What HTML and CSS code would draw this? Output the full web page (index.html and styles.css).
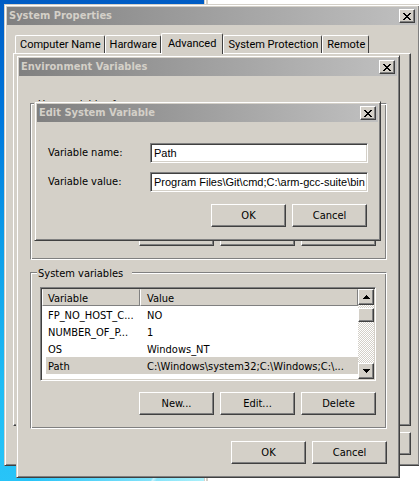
FILE: index.html
```html
<!DOCTYPE html>
<html lang="en">
<head>
<meta charset="utf-8">
<title>Environment Variables</title>
<link rel="stylesheet" href="styles.css">
</head>
<body>
<main class="desktop">
  <div class="wallpaper"></div>

  <section class="window win-properties">
    <header class="titlebar">
      <h1>System Properties</h1>
      <button class="close" aria-label="Close"><svg viewBox="0 0 8 7"><path d="M0 0h2v1h1v1h2v-1h1v-1h2v1h-1v1h-1v1h-1v1h1v1h1v1h1v1h-2v-1h-1v-1h-2v1h-1v1h-2v-1h1v-1h1v-1h1v-1h-1v-1h-1v-1h-1z"/></svg></button>
    </header>
    <div class="props-body">
      <nav class="tabs">
        <button class="tab">Computer Name</button>
        <button class="tab">Hardware</button>
        <button class="tab selected">Advanced</button>
        <button class="tab">System Protection</button>
        <button class="tab">Remote</button>
      </nav>
      <div class="tab-panel"></div>
      <div class="actions props-actions"><button class="btn" aria-label="Apply"></button></div>
    </div>
  </section>

  <section class="window win-environment">
    <header class="titlebar">
      <h2>Environment Variables</h2>
      <button class="close" aria-label="Close"><svg viewBox="0 0 8 7"><path d="M0 0h2v1h1v1h2v-1h1v-1h2v1h-1v1h-1v1h-1v1h1v1h1v1h1v1h-2v-1h-1v-1h-2v1h-1v1h-2v-1h1v-1h1v-1h1v-1h-1v-1h-1v-1h-1z"/></svg></button>
    </header>
    <div class="env-body">
      <div class="group">
        <h3 class="legend">User variables for</h3>
        <div class="actions">
          <button class="btn" aria-label="New"></button>
          <button class="btn" aria-label="Edit"></button>
          <button class="btn" aria-label="Delete"></button>
        </div>
      </div>
      <div class="group">
        <h3 class="legend">System variables</h3>
        <div class="list">
          <div class="rows">
            <table>
              <thead><tr><th class="col-name">Variable</th><th>Value</th></tr></thead>
              <tbody>
                <tr><td>FP_NO_HOST_C...</td><td>NO</td></tr>
                <tr><td>NUMBER_OF_P...</td><td>1</td></tr>
                <tr><td>OS</td><td>Windows_NT</td></tr>
                <tr class="current"><td>Path</td><td>C:\Windows\system32;C:\Windows;C:\...</td></tr>
              </tbody>
            </table>
          </div>
          <div class="scrollbar">
            <button class="arrow" aria-label="Scroll up"><svg viewBox="0 0 7 4"><path d="M3 0h1v1h1v1h1v1h1v1h-7v-1h1v-1h1v-1h1z"/></svg></button>
            <div class="thumb"></div>
            <button class="arrow" aria-label="Scroll down"><svg viewBox="0 0 7 4"><path d="M0 0h7v1h-1v1h-1v1h-1v1h-1v-1h-1v-1h-1v-1h-1z"/></svg></button>
          </div>
        </div>
        <div class="actions">
          <button class="btn">New...</button>
          <button class="btn">Edit...</button>
          <button class="btn">Delete</button>
        </div>
      </div>
      <div class="actions">
        <button class="btn">OK</button>
        <button class="btn">Cancel</button>
      </div>
    </div>
  </section>

  <section class="window win-edit">
    <header class="titlebar">
      <h2>Edit System Variable</h2>
      <button class="close" aria-label="Close"><svg viewBox="0 0 8 7"><path d="M0 0h2v1h1v1h2v-1h1v-1h2v1h-1v1h-1v1h-1v1h1v1h1v1h1v1h-2v-1h-1v-1h-2v1h-1v1h-2v-1h1v-1h1v-1h1v-1h-1v-1h-1v-1h-1z"/></svg></button>
    </header>
    <form class="edit-body">
      <label for="var-name">Variable name:</label>
      <input id="var-name" type="text" value="Path">
      <label for="var-value">Variable value:</label>
      <input id="var-value" type="text" value="Program Files\Git\cmd;C:\arm-gcc-suite\bin">
      <div class="actions">
        <button class="btn" type="button">OK</button>
        <button class="btn" type="button">Cancel</button>
      </div>
    </form>
  </section>
</main>
</body>
</html>
```
FILE: styles.css
```css
:root {
  --face: #d4d0c8;
  --shadow: #808080;
  --dark: #404040;
  --ui: Tahoma, "DejaVu Sans Condensed", "DejaVu Sans", sans-serif;
}

* { box-sizing: border-box; }

body {
  margin: 0;
  font: 11px/16px var(--ui);
  color: #000;
  background: #fff;
}

button, input { font: inherit; color: inherit; padding: 0; }
h1, h2, h3 { margin: 0; font-size: inherit; }
svg { display: block; fill: #000; shape-rendering: crispEdges; }

.desktop {
  position: relative;
  min-height: 100vh;
  overflow: hidden;
}

.wallpaper {
  width: 208px;
  height: 100vh;
  background:
    linear-gradient(120deg, transparent 58%, #ffffff90 62%, transparent 70%) 130px 100% / 40px 12px no-repeat,
    radial-gradient(circle at 220px 100%, #b8f4fa, #b8f4fa00 190px),
    linear-gradient(#005cc4, #0078dc 25%, #0c9ce8 50%, #20bcf4 80%, #28c4f8);
  border-right: 2px solid #d4d0c8;
  box-shadow: inset -1px 0 #fff, inset -2px 0 #d4d0c8;
}

/* Windows */
.window {
  position: absolute;
  padding: 2px;
  background: var(--face);
  border: 1px solid;
  border-color: var(--face) var(--dark) var(--dark) var(--face);
  box-shadow: inset 1px 1px #fff, inset -1px -1px var(--shadow);
}

.win-properties { left: 4px; top: 4px; width: 416px; }
.win-environment { left: 16px; top: 55px; width: 384px; }
.win-edit { left: 34px; top: 101px; width: 347px; }

.titlebar {
  display: flex;
  align-items: center;
  justify-content: space-between;
  height: 18px;
  padding: 0 2px;
  color: var(--face);
  font-weight: bold;
  background: linear-gradient(90deg, #808080, #c0c0c0);
}

.close, .btn, .arrow, .thumb {
  background: var(--face);
  border: 1px solid;
  border-color: #fff var(--dark) var(--dark) #fff;
  box-shadow: inset -1px -1px var(--shadow);
}

.close {
  width: 16px;
  height: 14px;
  padding: 2px 3px;
}
.close svg { width: 8px; height: 7px; }

.btn { width: 75px; height: 23px; }

.actions {
  display: flex;
  justify-content: flex-end;
  gap: 6px;
}

/* System Properties */
.props-body { padding: 8px 6px; }

.tabs {
  display: flex;
  align-items: flex-end;
  height: 20px;
  padding-left: 2px;
  font-family: Roboto, sans-serif;
}

.tab {
  height: 18px;
  padding: 0 3px 0 4px;
  white-space: nowrap;
  background: var(--face);
  border: 1px solid;
  border-color: #fff var(--dark) transparent #fff;
  border-bottom: 0;
  border-radius: 2px 2px 0 0;
}
.tab.selected { height: 21px; margin-bottom: -1px; padding: 0 6px; z-index: 1; }

.tab-panel {
  height: 373px;
  margin-bottom: 6px;
  border: 1px solid;
  border-color: #fff var(--dark) var(--dark) #fff;
  box-shadow: inset -1px -1px var(--shadow);
}

/* Environment Variables */
.env-body { padding: 27px 10px 11px 11px; }

.group {
  display: flex;
  flex-direction: column;
  height: 157px;
  margin-bottom: 12px;
  padding: 0 10px 13px 9px;
  border: 1px solid var(--shadow);
  border-right-color: #fff;
  border-bottom-color: #fff;
  box-shadow: inset 1px 1px #fff, inset -1px -1px var(--shadow);
}
.group .actions { margin-top: auto; }

.legend {
  align-self: flex-start;
  height: 16px;
  margin: -7px 0 5px -3px;
  padding: 0 9px 0 1px;
  font-weight: normal;
  background: var(--face);
}

.list {
  display: flex;
  height: 94px;
  padding: 1px;
  background: #fff;
  border: 1px solid;
  border-color: var(--shadow) #fff #fff var(--shadow);
  box-shadow: inset 1px 1px var(--dark), inset -1px -1px var(--face);
}
.rows { flex: 1; min-width: 0; }

table {
  width: 100%;
  table-layout: fixed;
  border-collapse: separate;
  border-spacing: 0;
  white-space: nowrap;
}
.col-name { width: 98px; }
th {
  height: 17px;
  padding: 2px 6px 0;
  line-height: 13px;
  font-weight: normal;
  text-align: left;
  background: var(--face);
  border: 1px solid;
  border-color: var(--face) var(--shadow) var(--shadow) #fff;
}
th.col-name { padding-left: 5px; }
td { height: 17px; padding: 2px 0 0 7px; line-height: 15px; }
td:first-child { padding-left: 2px; border-left: 4px solid #fff; }
.current td { background: var(--face); }

.scrollbar {
  display: flex;
  flex: none;
  flex-direction: column;
  width: 16px;
  background: repeating-conic-gradient(#fff 0 25%, var(--face) 0 50%) 0 0 / 2px 2px;
}
.arrow {
  display: grid;
  place-items: center;
  width: 16px;
  height: 16px;
}
.arrow svg { width: 7px; height: 4px; }
.thumb { height: 14px; margin: 3px 0 auto; }

/* Edit System Variable */
.edit-body {
  display: grid;
  grid-template-columns: 102px 1fr;
  row-gap: 9px;
  align-items: center;
  padding: 21px 10px 11px 11px;
}
.edit-body .actions { grid-column: 1 / -1; margin-top: 3px; padding-right: 1px; }

input {
  width: 100%;
  height: 20px;
  padding: 0 0 0 3px;
  font-family: "Liberation Sans", Arial, sans-serif;
  background: #fff;
  border: 1px solid;
  border-color: var(--shadow) #fff #fff var(--shadow);
  box-shadow: inset 1px 1px var(--dark), inset -1px -1px var(--face);
}
```
